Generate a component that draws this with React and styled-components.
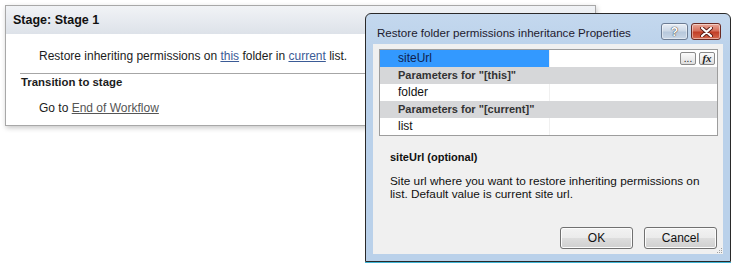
import styled, { createGlobalStyle } from "styled-components";

const GlobalStyle = createGlobalStyle`
  html, body {
    margin: 0;
    padding: 0;
    background: #ffffff;
    overflow: hidden;
  }
  body {
    font-family: "Liberation Sans", Arial, sans-serif;
    font-size: 12px;
    color: #1a1a1a;
  }
`;

const Canvas = styled.div`
  position: relative;
  width: 731px;
  height: 263px;
  overflow: hidden;
`;

/* ---------- workflow stage panel ---------- */

const StagePanel = styled.section`
  box-sizing: border-box;
  margin: 5px 0 0 5px;
  width: 591px;
  height: 121px;
  border: 1px solid #a8a8a8;
  background: #fff;
  box-shadow: 1px 2px 5px rgba(0, 0, 0, 0.22);
`;

const StageHeader = styled.div`
  height: 28px;
  line-height: 28px;
  padding-left: 7px;
  font-weight: bold;
  font-size: 12.5px;
  color: #111;
  background: linear-gradient(#f1f3f6, #dde2e9);
`;

const StageBody = styled.div`
  padding: 14px 0 0 14px;
`;

const Line = styled.div`
  line-height: 16px;
  margin-left: ${(p) => p.$indent || 0}px;
  margin-top: ${(p) => p.$top || 0}px;
  font-size: ${(p) => (p.$bold ? "11.4px" : "12px")};
  font-weight: ${(p) => (p.$bold ? "bold" : "normal")};
  color: #1c1c1c;
`;

const Separator = styled.div`
  margin-top: 9px;
  border-top: 1px solid #a6a6a6;
`;

const Link = styled.span`
  text-decoration: underline;
  color: ${(p) => (p.$muted ? "#555555" : "#3b5b96")};
`;

/* ---------- properties dialog ---------- */

const Dialog = styled.div`
  position: absolute;
  left: 365px;
  top: 13px;
  box-sizing: border-box;
  width: 366px;
  height: 249px;
  border: 1px solid #2a2a2a;
  border-radius: 6px 6px 0 0;
  background: linear-gradient(#c4d8ee, #bad1ea 40px);
  display: flex;
  flex-direction: column;
  box-shadow: 0 1px 0 #3fb4d4;
`;

const TitleBar = styled.div`
  height: 29px;
  display: flex;
  align-items: flex-start;
  padding: 9px 9px 0 11px;
  box-sizing: border-box;
`;

const Title = styled.div`
  flex: 1;
  margin-top: 3px;
  font-size: 11.6px;
  line-height: 14px;
  color: #1e1a2e;
  white-space: nowrap;
`;

const CaptionButton = styled.div`
  box-sizing: border-box;
  width: ${(p) => (p.$close ? 30 : 27)}px;
  height: 17px;
  margin-left: ${(p) => (p.$close ? 3 : 0)}px;
  border: 1px solid ${(p) => (p.$close ? "#6b2a22" : "#6c7c93")};
  border-radius: 3px;
  display: flex;
  align-items: center;
  justify-content: center;
  background: ${(p) =>
    p.$close
      ? "linear-gradient(#e9a898, #d66f5b 45%, #c23f27 55%, #d5694f)"
      : "linear-gradient(#e8eef6, #cdd9e7 45%, #b7c8dc 55%, #c9d7e7)"};
  box-shadow: inset 0 0 0 1px rgba(255, 255, 255, 0.45);
  font-weight: bold;
  font-size: 12px;
  color: #fff;
  text-shadow: 0 0 1px #333, 0 0 1px #333;
`;

const Client = styled.div`
  flex: 1;
  margin: 1px 7px 7px 7px;
  background: #f0f0f0;
  display: flex;
  flex-direction: column;
  padding: 5px 5px 5px 6px;
`;

const Grid = styled.div`
  border: 1px solid #9d9d9d;
  background: #fff;
`;

const Row = styled.div`
  display: flex;
  height: 17px;
  line-height: 17px;
  background: ${(p) => (p.$category ? "#d6d7d9" : "#fff")};
`;

const NameCell = styled.div`
  box-sizing: border-box;
  width: ${(p) => (p.$category ? "100%" : "170px")};
  padding-left: 18px;
  font-size: ${(p) => (p.$category ? "11px" : "12px")};
  font-weight: ${(p) => (p.$category ? "bold" : "normal")};
  color: ${(p) => (p.$selected ? "#0f1f4f" : p.$category ? "#333" : "#111")};
  background: ${(p) => (p.$selected ? "#3399ff" : "transparent")};
  border-right: ${(p) => (p.$category ? "none" : "1px solid #f0f0f0")};
`;

const ValueCell = styled.div`
  flex: 1;
  display: flex;
  justify-content: flex-end;
  align-items: center;
  gap: 3px;
  padding-right: 2px;
`;

const MiniButton = styled.div`
  box-sizing: border-box;
  width: 16px;
  height: 13px;
  border: 1px solid #8a8a8a;
  border-radius: 2px;
  background: linear-gradient(#fbfbfb, #dedede);
  display: flex;
  align-items: flex-end;
  justify-content: center;
  font-size: ${(p) => (p.$fx ? "11px" : "10px")};
  line-height: ${(p) => (p.$fx ? "12px" : "10px")};
  font-family: ${(p) => (p.$fx ? '"Liberation Serif", serif' : "inherit")};
  font-style: ${(p) => (p.$fx ? "italic" : "normal")};
  font-weight: ${(p) => (p.$fx ? "bold" : "normal")};
  color: #222;
`;

const HelpTitle = styled.div`
  margin: 14px 0 0 11px;
  font-size: 11px;
  font-weight: bold;
  line-height: 14px;
  color: #111;
`;

const HelpText = styled.div`
  margin: 11px 0 0 11px;
  width: 325px;
  font-size: 11.8px;
  line-height: 13px;
  color: #111;
`;

const ButtonRow = styled.div`
  margin-top: auto;
  display: flex;
  justify-content: flex-end;
  gap: 11px;
  padding-right: 1px;
  position: relative;
`;

const PushButton = styled.button`
  box-sizing: border-box;
  width: 73px;
  height: 22px;
  border: 1px solid #707070;
  border-radius: 3px;
  background: linear-gradient(#f2f2f2, #ebebeb 48%, #dddddd 52%, #cfcfcf);
  box-shadow: inset 0 0 0 1px #fcfcfc;
  font-family: "Liberation Sans", Arial, sans-serif;
  font-size: 12px;
  color: #111;
  padding: 0;
`;

const Grip = styled.svg`
  position: absolute;
  right: -5px;
  bottom: -5px;
`;

const CloseGlyph = () => (
  <svg width="13" height="10" viewBox="0 0 13 10">
    <path d="M2 1 L11 9 M11 1 L2 9" stroke="#5a1c14" strokeWidth="4" strokeLinecap="round" />
    <path d="M2 1 L11 9 M11 1 L2 9" stroke="#ffffff" strokeWidth="2.2" strokeLinecap="round" />
  </svg>
);

const App = () => {
  return (
    <Canvas>
      <GlobalStyle />
      <StagePanel>
        <StageHeader>Stage: Stage 1</StageHeader>
        <StageBody>
          <Line $indent={19}>
            Restore inheriting permissions on <Link>this</Link> folder in <Link>current</Link> list.
          </Line>
          <Separator />
          <Line $indent={1} $bold>Transition to stage</Line>
          <Line $indent={19} $top={10}>
            Go to <Link $muted>End of Workflow</Link>
          </Line>
        </StageBody>
      </StagePanel>

      <Dialog>
        <TitleBar>
          <Title>Restore folder permissions inheritance Properties</Title>
          <CaptionButton>?</CaptionButton>
          <CaptionButton $close>
            <CloseGlyph />
          </CaptionButton>
        </TitleBar>
        <Client>
          <Grid>
            <Row>
              <NameCell $selected>siteUrl</NameCell>
              <ValueCell>
                <MiniButton>...</MiniButton>
                <MiniButton $fx>fx</MiniButton>
              </ValueCell>
            </Row>
            <Row $category>
              <NameCell $category>Parameters for "[this]"</NameCell>
            </Row>
            <Row>
              <NameCell>folder</NameCell>
              <ValueCell />
            </Row>
            <Row $category>
              <NameCell $category>Parameters for "[current]"</NameCell>
            </Row>
            <Row>
              <NameCell>list</NameCell>
              <ValueCell />
            </Row>
          </Grid>
          <HelpTitle>siteUrl (optional)</HelpTitle>
          <HelpText>
            Site url where you want to restore inheriting permissions on list. Default value is current site url.
          </HelpText>
          <ButtonRow>
            <PushButton>OK</PushButton>
            <PushButton>Cancel</PushButton>
            <Grip width="7" height="7" viewBox="0 0 7 7">
              <rect x="5" y="1" width="1" height="1" fill="#a0a0a0" />
              <rect x="3" y="3" width="1" height="1" fill="#a0a0a0" />
              <rect x="5" y="3" width="1" height="1" fill="#a0a0a0" />
              <rect x="1" y="5" width="1" height="1" fill="#a0a0a0" />
              <rect x="3" y="5" width="1" height="1" fill="#a0a0a0" />
              <rect x="5" y="5" width="1" height="1" fill="#a0a0a0" />
            </Grip>
          </ButtonRow>
        </Client>
      </Dialog>
    </Canvas>
  );
};

export default App;
